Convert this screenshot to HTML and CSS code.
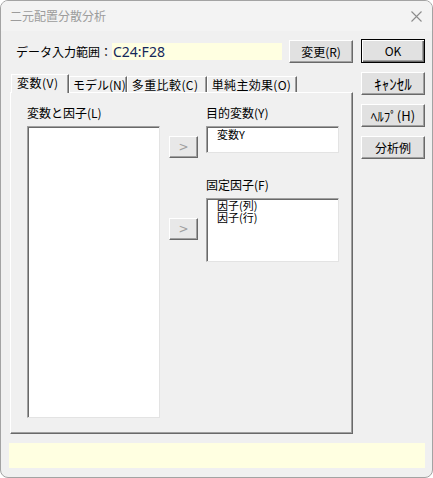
FILE: index.html
```html
<!DOCTYPE html>
<html lang="ja">
<head>
<meta charset="utf-8">
<title>二元配置分散分析</title>
<link rel="stylesheet" href="styles.css">
</head>
<body>
<div class="window">
  <div class="titlebar">
    <span class="title">二元配置分散分析</span>
    <svg class="close" width="11" height="11" viewBox="0 0 11 11"><path d="M0.5 0.5 L10.5 10.5 M10.5 0.5 L0.5 10.5" stroke="#8c8c8c" stroke-width="1.1" fill="none"/></svg>
  </div>
  <div class="body">
    <div class="main">
      <div class="range-row">
        <span class="range-label">データ入力範囲：</span>
        <span class="range-field">C24:F28</span>
        <button class="btn btn-change">変更(R)</button>
      </div>
      <div class="tabs">
        <div class="tab tab-active tab-vars">変数(V)</div>
        <div class="tab tab-model">モデル(N)</div>
        <div class="tab tab-multi">多重比較(C)</div>
        <div class="tab tab-simple">単純主効果(O)</div>
      </div>
      <div class="panel">
        <div class="col col-source">
          <div class="label">変数と因子(L)</div>
          <div class="listbox listbox-source"></div>
        </div>
        <div class="col col-arrows">
          <button class="btn arrow arrow-dep">&gt;</button>
          <button class="btn arrow arrow-fixed">&gt;</button>
        </div>
        <div class="col col-target">
          <div class="label">目的変数(Y)</div>
          <div class="listbox listbox-dep">
            <div class="item">変数Y</div>
          </div>
          <div class="label label-fixed">固定因子(F)</div>
          <div class="listbox listbox-fixed">
            <div class="items">因子(列)<br>因子(行)</div>
          </div>
        </div>
      </div>
    </div>
    <div class="side">
      <button class="btn btn-side btn-default">OK</button>
      <button class="btn btn-side btn-cancel">ｷｬﾝｾﾙ</button>
      <button class="btn btn-side btn-kana">ﾍﾙﾌﾟ(H)</button>
      <button class="btn btn-side">分析例</button>
    </div>
  </div>
  <div class="status"></div>
</div>
</body>
</html>
```

FILE: styles.css
```css
html, body {
  margin: 0;
  padding: 0;
  background: #ffffff;
}

.window {
  width: 433px;
  height: 478px;
  box-sizing: border-box;
  border: 1px solid #a3a3a3;
  border-radius: 8px;
  background: #f0f0f0;
  overflow: hidden;
  display: flex;
  flex-direction: column;
  font-family: "Noto Sans CJK JP", "Noto Sans", sans-serif;
  font-size: 12px;
  color: #000;
}

.titlebar {
  height: 30px;
  flex: none;
  display: flex;
  align-items: center;
  justify-content: space-between;
  padding: 0 10px 0 9px;
  background: #f3f3f3;
}

.title {
  color: #9c9c9c;
  font-size: 12px;
  line-height: 14px;
}

.close {
  display: block;
}

.body {
  flex: 1;
  display: flex;
  gap: 8px;
  padding: 8px 7px 0 9px;
}

.main {
  width: 343px;
  display: flex;
  flex-direction: column;
}

.range-row {
  display: flex;
  align-items: center;
  height: 23px;
  margin-top: 1px;
}

.range-label {
  width: 96px;
  padding-left: 6px;
  line-height: 14px;
}

.range-field {
  width: 170px;
  height: 17px;
  box-sizing: border-box;
  padding-left: 1px;
  background: #ffffe1;
  color: #14275a;
  font-family: "Noto Sans", sans-serif;
  font-size: 14px;
  line-height: 17px;
}

.btn {
  font-family: inherit;
  font-size: 12px;
  line-height: 14px;
  color: #000;
  background: #e1e1e1;
  border: 1px solid;
  border-color: #ffffff #696969 #696969 #ffffff;
  box-shadow: inset -1px -1px 0 #a0a0a0;
  padding: 0;
  margin: 0;
  box-sizing: border-box;
}

.btn-change {
  width: 64px;
  height: 23px;
  margin-left: 7px;
}

.tabs {
  display: flex;
  align-items: flex-end;
  height: 18px;
  margin-top: 11px;
  padding-left: 1px;
}

.tab {
  height: 16px;
  box-sizing: border-box;
  padding: 0 0 0 4px;
  line-height: 15px;
  border-left: 1px solid #ffffff;
  border-top: 1px solid #ffffff;
  border-right: 1px solid #696969;
  box-shadow: inset -1px 0 0 #a0a0a0;
  white-space: nowrap;
  flex: none;
}

.tab-vars {
  min-width: 58px;
  letter-spacing: 0.5px;
}

.tab-model {
  min-width: 57px;
  padding-left: 3px;
}

.tab-multi {
  min-width: 80px;
  letter-spacing: 0.4px;
}

.tab-simple {
  min-width: 90px;
  letter-spacing: 0.3px;
}

.tab-active {
  height: 19px;
  margin-bottom: -1px;
  padding-left: 5px;
  line-height: 16px;
  position: relative;
  z-index: 1;
  background: #f0f0f0;
}

.panel {
  height: 342px;
  box-sizing: border-box;
  border-left: 1px solid #ffffff;
  border-top: 1px solid #ffffff;
  border-right: 1px solid #696969;
  border-bottom: 1px solid #696969;
  box-shadow: inset -1px -1px 0 #a0a0a0;
  display: flex;
  padding: 13px 0 0 16px;
}

.col {
  display: flex;
  flex-direction: column;
}

.label {
  height: 14px;
  line-height: 14px;
  white-space: nowrap;
}

.col-source {
  width: 133px;
}

.listbox {
  margin-top: 6px;
  box-sizing: border-box;
  background: #ffffff;
  border-top: 1px solid #a0a0a0;
  border-left: 1px solid #a0a0a0;
  border-right: 1px solid #e3e3e3;
  border-bottom: 1px solid #e3e3e3;
  box-shadow: inset 1px 1px 0 #696969;
  padding: 1px 0 0 10px;
}

.listbox-source {
  height: 292px;
}

.col-arrows {
  width: 29px;
  margin-left: 9px;
}

.arrow {
  width: 29px;
  height: 22px;
  color: #a0a0a0;
  font-family: "DejaVu Sans", sans-serif;
  font-size: 12px;
  background: #e8e8e8;
}

.arrow-dep {
  margin-top: 30px;
}

.arrow-fixed {
  margin-top: 60px;
}

.col-target {
  width: 133px;
  margin-left: 8px;
}

.listbox-dep {
  height: 27px;
}

.label-fixed {
  margin-top: 25px;
}

.listbox-fixed {
  height: 64px;
  padding-top: 0;
}

.item,
.items {
  font-size: 11px;
  line-height: 12px;
  white-space: nowrap;
}

.side {
  width: 64px;
  display: flex;
  flex-direction: column;
  gap: 9px;
}

.btn-side {
  width: 64px;
  height: 23px;
}

.btn-kana {
  font-size: 13px;
}

.btn-cancel {
  font-size: 15px;
}

.btn-default {
  height: 24px;
  border: 1px solid #000000;
  box-shadow: inset 1px 1px 0 #ffffff, inset -1px -1px 0 #696969, inset -2px -2px 0 #a0a0a0;
}

.status {
  flex: none;
  height: 25px;
  margin: 0 7px 9px 8px;
  background: #ffffe1;
}
```
